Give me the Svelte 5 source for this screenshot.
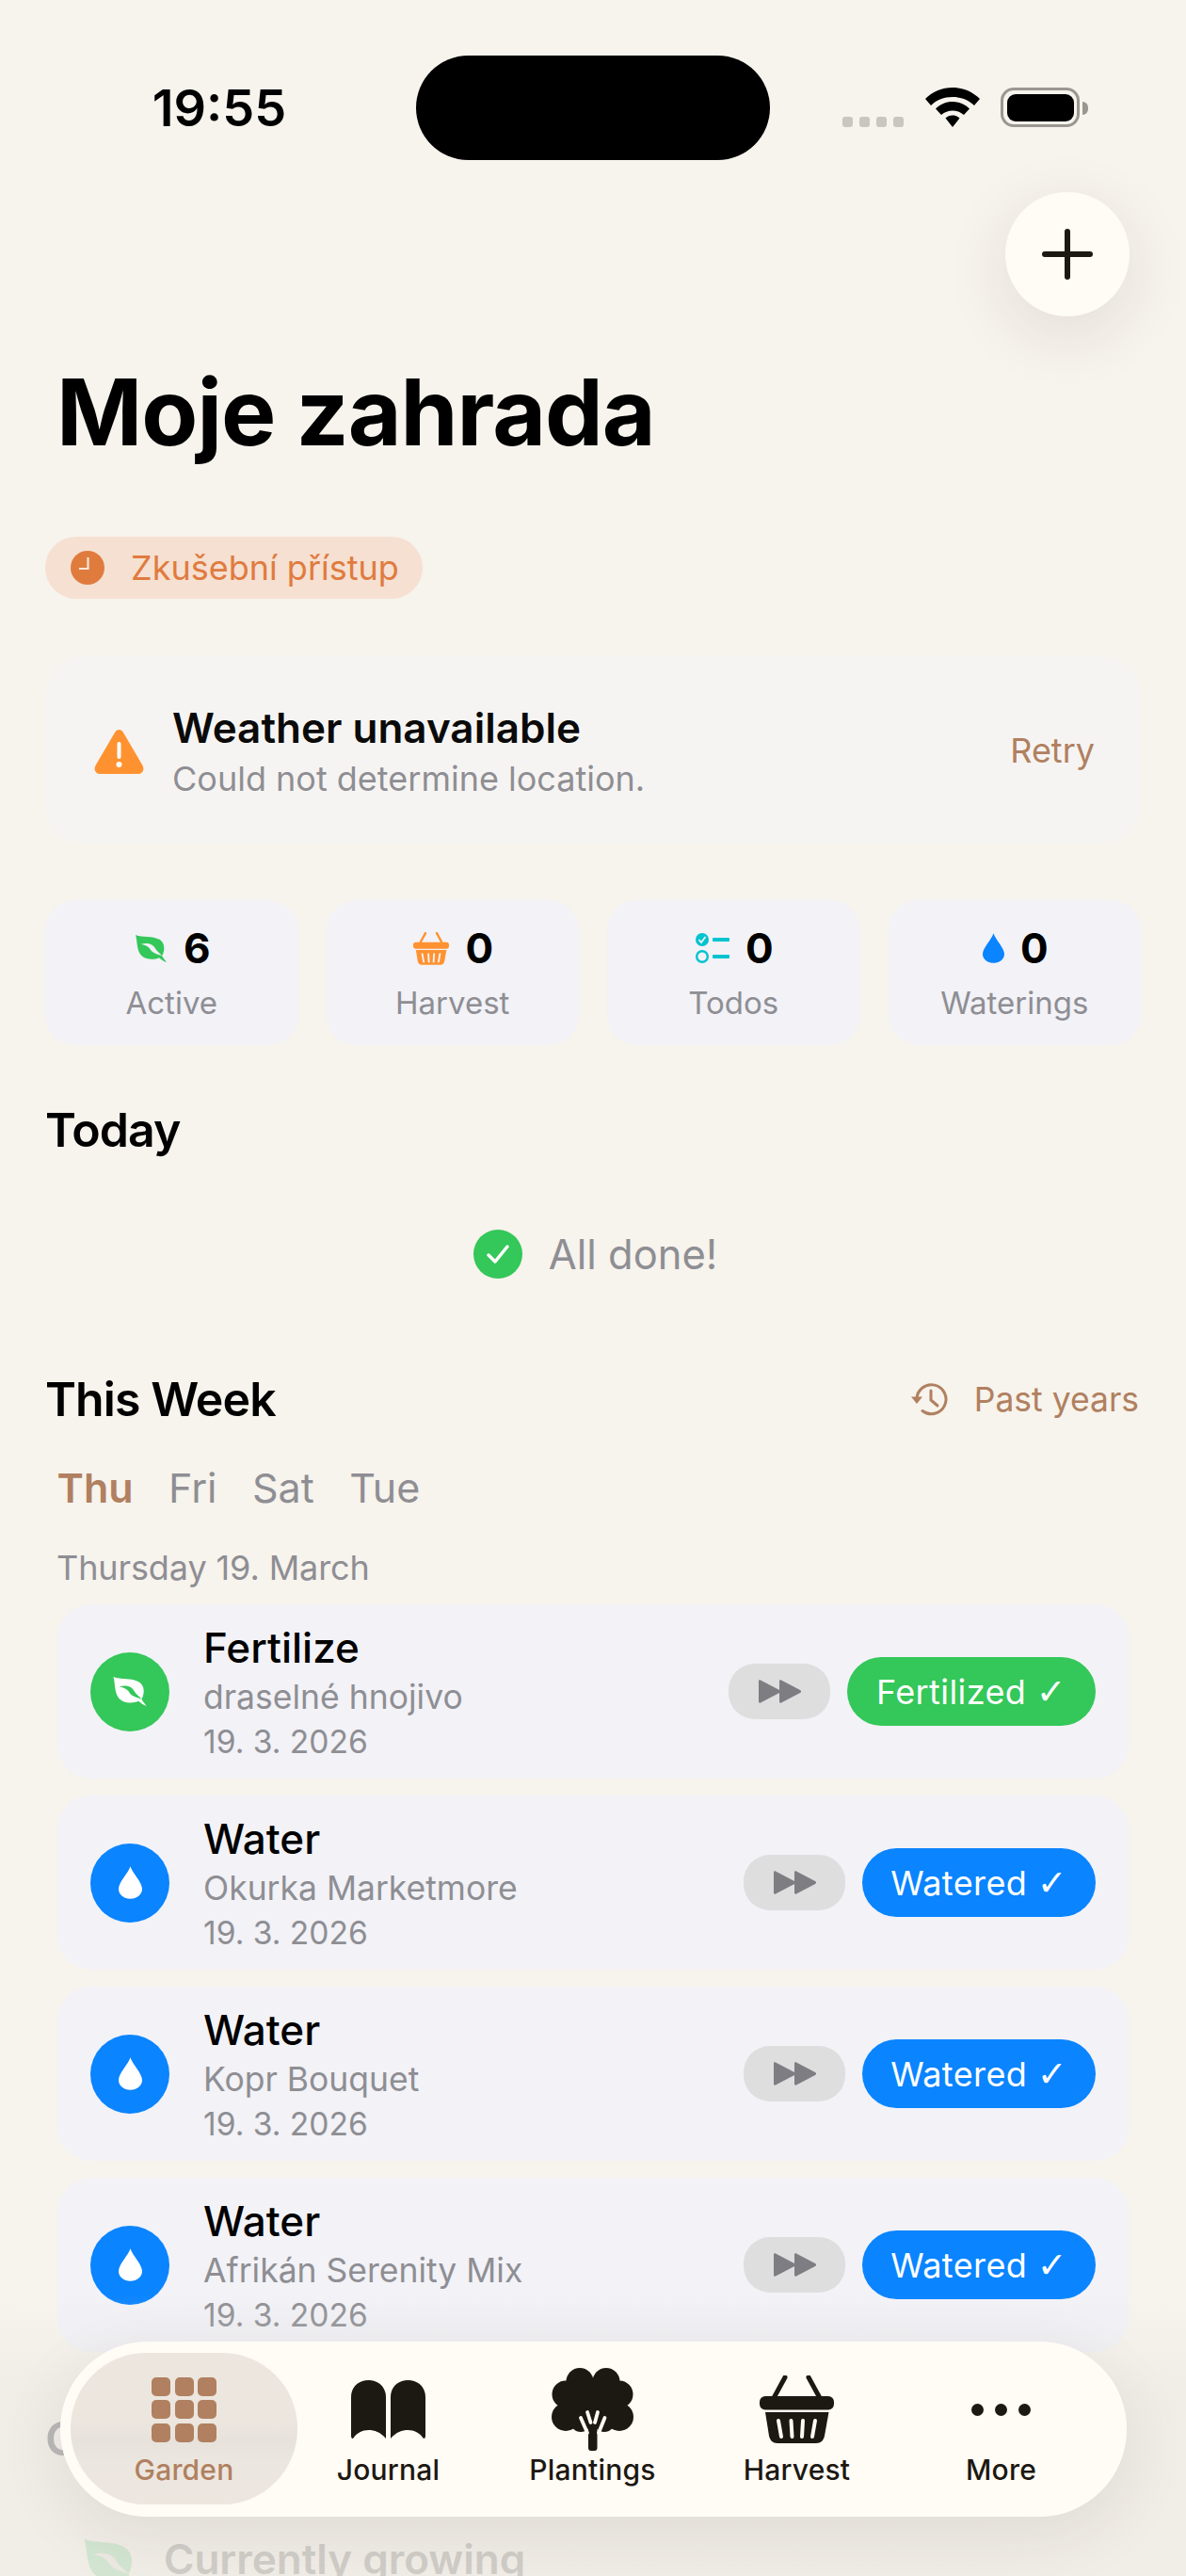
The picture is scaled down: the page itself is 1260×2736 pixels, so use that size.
<script>
  const stats = [
    { k: 'leaf', n: 6, l: 'Active' },
    { k: 'basket', n: 0, l: 'Harvest' },
    { k: 'todo', n: 0, l: 'Todos' },
    { k: 'drop', n: 0, l: 'Waterings' }
  ];
  const tasks = [
    { t: 'Fertilize', s: 'draselné hnojivo', a: 'Fertilized', g: true },
    { t: 'Water', s: 'Okurka Marketmore', a: 'Watered' },
    { t: 'Water', s: 'Kopr Bouquet', a: 'Watered' },
    { t: 'Water', s: 'Afrikán Serenity Mix', a: 'Watered' }
  ];
  const leafD = 'M1 0C8 3 20 1 27 5C34 9 33 18 30 23C31 25 33 27 35 30C32 29 29 27 27 25C20 28 10 27 6 21C2 15 3 7 1 0Z';
</script>

{#snippet leaf(cls, vein)}
  <svg class={cls} viewBox="0 0 36 30" aria-hidden="true">
    <path d={leafD} fill="currentColor" />
    <path d="M7 10C14 8 20 10 22 14C24 18 28 20 30 23C25 21 20 20 18 17C16 13 12 11 7 10Z" fill={vein} />
  </svg>
{/snippet}

{#snippet drop(cls)}
  <svg class={cls} viewBox="0 0 24 33" aria-hidden="true">
    <path d="M12 0C14 7 24 16 24 23C24 29 18.500 33 12 33C5.500 33 0 29 0 23C0 16 10 7 12 0Z" fill="currentColor" />
  </svg>
{/snippet}

{#snippet basket(cls, bg)}
  <svg class={cls} viewBox="0 0 79 72" aria-hidden="true">
    <path d="M27 2L15 24M52 2L64 24" stroke="currentColor" stroke-width="5" stroke-linecap="round" fill="none" />
    <rect x="0" y="22" width="79" height="14.500" rx="6" fill="currentColor" />
    <path d="M6 39H73.500L69 64C68 69 65 72 60 72H19C14 72 11 69 10 64Z" fill="currentColor" />
    <path d="M20 48L23 65M33.500 48L34.500 65M46 48L45 65M59 48L56 65" stroke={bg} stroke-width="4" stroke-linecap="round" fill="none" />
  </svg>
{/snippet}

{#snippet todo(cls)}
  <svg class={cls} viewBox="0 0 36 32" aria-hidden="true">
    <circle cx="7" cy="7" r="7" fill="currentColor" />
    <path d="M3.500 7L6 10L10.500 4" stroke="#f2f2f7" stroke-width="1.800" fill="none" />
    <circle cx="7" cy="25" r="5.800" fill="none" stroke="currentColor" stroke-width="2.400" />
    <rect x="18" y="5" width="18" height="4" rx="1" fill="currentColor" />
    <rect x="18" y="23" width="18" height="4" rx="1" fill="currentColor" />
  </svg>
{/snippet}

{#snippet skip()}
  <svg class="skip-ic" viewBox="0 0 46 25" aria-hidden="true">
    <path d="M1 1.500C1 .500 2 0 3 .500L23 11C24.500 12 24.500 13 23 14L3 24.500C2 25 1 24.500 1 23.500Z M23 1.500C23 .500 24 0 25 .500L45 11C46.500 12 46.500 13 45 14L25 24.500C24 25 23 24.500 23 23.500Z" fill="currentColor" />
  </svg>
{/snippet}

<div class="page">
  <header class="status">
    <div class="time-wrap"><span class="time">19:55</span></div>
    <div class="island"></div>
    <div class="sys">
      <div class="dots"><i></i><i></i><i></i><i></i></div>
      <svg class="wifi" viewBox="0 0 58 42" aria-hidden="true">
        <path d="M29 0C40 0 50 4 58 12L52 19C46 13 38 10 29 10C20 10 12 13 6 19L0 12C8 4 18 0 29 0Z" fill="#000" />
        <path d="M29 15C36 15 42 17.500 47 22.500L41 29C37.500 26 33.500 24.500 29 24.500C24.500 24.500 20.500 26 17 29L11 22.500C16 17.500 22 15 29 15Z" fill="#000" />
        <path d="M29 29.500C32 29.500 34.500 30.500 36.500 32.500L29 42L21.500 32.500C23.500 30.500 26 29.500 29 29.500Z" fill="#000" />
      </svg>
      <div class="battery"><span class="cell"></span></div>
      <span class="cap"></span>
    </div>
  </header>

  <button class="fab" aria-label="Add">
    <svg viewBox="0 0 54 54" aria-hidden="true"><path d="M27 3V51M3 27H51" stroke="#1c1812" stroke-width="6" stroke-linecap="round" /></svg>
  </button>

  <h1>Moje zahrada</h1>

  <div class="badge">
    <svg viewBox="0 0 36 36" aria-hidden="true">
      <circle cx="18" cy="18" r="18" fill="#e07b3e" />
      <path d="M18.500 7V19H9" stroke="#f7e4d7" stroke-width="2.200" fill="none" />
    </svg>
    <span>Zkušební přístup</span>
  </div>

  <section class="weather">
    <svg class="warn" viewBox="0 0 53 47" aria-hidden="true">
      <path d="M22 3C24 -1 29 -1 31 3L51.500 38C54 43 51 47 46 47H7C2 47 -1 43 1.500 38Z" fill="#ff9230" />
      <rect x="24.500" y="13" width="4" height="18" rx="2" fill="#fff" />
      <circle cx="26.500" cy="37" r="3" fill="#fff" />
    </svg>
    <div class="w-text">
      <div class="w-title">Weather unavailable</div>
      <div class="w-sub">Could not determine location.</div>
    </div>
    <span class="retry">Retry</span>
  </section>

  <section class="stats">
    {#each stats as s}
      <div class="stat">
        <div class="stat-top">
          {#if s.k === 'leaf'}
            {@render leaf('st-leaf', '#f2f2f7')}
          {:else if s.k === 'basket'}
            {@render basket('st-basket', '#f2f2f7')}
          {:else if s.k === 'todo'}
            {@render todo('st-todo')}
          {:else}
            {@render drop('st-drop')}
          {/if}
          <b>{s.n}</b>
        </div>
        <div class="stat-l">{s.l}</div>
      </div>
    {/each}
  </section>

  <h2 class="today">Today</h2>
  <div class="done">
    <svg viewBox="0 0 52 52" aria-hidden="true">
      <circle cx="26" cy="26" r="26" fill="#34c759" />
      <path d="M16 27L23 34L36 18" stroke="#fff" stroke-width="3.500" fill="none" stroke-linecap="round" stroke-linejoin="round" />
    </svg>
    <span>All done!</span>
  </div>

  <div class="week-head">
    <h2>This Week</h2>
    <div class="past">
      <svg viewBox="0 0 40 36" aria-hidden="true">
        <path d="M6 18A15.500 15.500 0 1 1 12 30.500" fill="none" stroke="currentColor" stroke-width="3" stroke-linecap="round" />
        <path d="M0 15.500H12L6 23Z" fill="currentColor" />
        <path d="M21 9V19L28 25" fill="none" stroke="currentColor" stroke-width="3" stroke-linecap="round" stroke-linejoin="round" />
      </svg>
      <span>Past years</span>
    </div>
  </div>

  <nav class="days">
    <span class="on">Thu</span><span>Fri</span><span>Sat</span><span>Tue</span>
  </nav>

  <div class="date-h">Thursday 19. March</div>

  <div class="tasks">
    {#each tasks as t}
      <article class="task">
        <div class="t-ic" class:green={t.g}>
          {#if t.g}
            {@render leaf('t-leaf', '#34c759')}
          {:else}
            {@render drop('t-drop')}
          {/if}
        </div>
        <div class="t-text">
          <div class="t-title">{t.t}</div>
          <div class="t-sub">{t.s}</div>
          <div class="t-date">19. 3. 2026</div>
        </div>
        <button class="skip" aria-label="Skip">{@render skip()}</button>
        <button class="act" class:green={t.g}>{t.a} <span class="chk">✓</span></button>
      </article>
    {/each}
  </div>

  <h2 class="hidden-h">Crops overview</h2>
  <div class="growing">
    {@render leaf('g-leaf', '#ece8e2')}
    <span>Currently growing</span>
  </div>

  <div class="fog"></div>

  <nav class="tabbar">
    <div class="tab active">
      <div class="tab-ic">
        <div class="grid9">
          {#each Array(9) as _}<i></i>{/each}
        </div>
      </div>
      <span>Garden</span>
    </div>
    <div class="tab">
      <div class="tab-ic">
        <svg class="book" viewBox="0 0 79 62" aria-hidden="true">
          <path d="M0 59V18C0 7 8 0 18.500 0C29 0 37 7 37 18V62C31 55 25 53 18.500 53C12 53 6 56 2.500 61.500C1.500 62.500 0 62 0 59Z" fill="#1c1812" />
          <path d="M79 59V18C79 7 71 0 60.500 0C50 0 42 7 42 18V62C48 55 54 53 60.500 53C67 53 73 56 76.500 61.500C77.500 62.500 79 62 79 59Z" fill="#1c1812" />
        </svg>
      </div>
      <span>Journal</span>
    </div>
    <div class="tab">
      <div class="tab-ic">
        <svg class="tree" viewBox="0 0 87 88" aria-hidden="true">
          <g fill="#1c1812">
            <circle cx="30" cy="14.500" r="14.500" /><circle cx="58" cy="14.500" r="14.500" />
            <circle cx="15" cy="28" r="14.500" /><circle cx="72" cy="28" r="14.500" />
            <circle cx="15" cy="52" r="15" /><circle cx="72" cy="52" r="15" />
            <rect x="15" y="14" width="57" height="40" />
            <circle cx="31" cy="57" r="11" /><circle cx="56" cy="57" r="11" />
            <rect x="39" y="50" width="9.500" height="38" rx="3" />
          </g>
          <path d="M31 53L38 69M56.500 53L50 69M38 47L41.500 58M49 47L46 58" stroke="#fffbf5" stroke-width="3.800" stroke-linecap="round" fill="none" />
        </svg>
      </div>
      <span>Plantings</span>
    </div>
    <div class="tab">
      <div class="tab-ic">{@render basket('tab-basket', '#fffbf5')}</div>
      <span>Harvest</span>
    </div>
    <div class="tab">
      <div class="tab-ic"><div class="more"><i></i><i></i><i></i></div></div>
      <span>More</span>
    </div>
  </nav>
</div>

<style>
  :global(body) { margin: 0; background: #f7f3ed; }
  .page {
    position: relative;
    width: 1260px;
    height: 2736px;
    overflow: hidden;
    background: #f7f3ed;
    font-family: Inter, "Liberation Sans", sans-serif;
    color: #000;
  }
  h1, h2 { margin: 0; font-weight: 600; }
  button { border: 0; font-family: inherit; padding: 0; }

  .status { display: flex; height: 170px; }
  .time-wrap { width: 442px; display: flex; justify-content: center; padding: 89px 0 0 24px; box-sizing: border-box; }
  .time { font-size: 54px; line-height: 52px; font-weight: 600; }
  .island { width: 376px; height: 111px; margin-top: 59px; border-radius: 56px; background: #000; }
  .sys { display: flex; align-items: flex-end; height: 42px; margin-top: 93px; padding-left: 77px; }
  .dots { display: flex; gap: 7px; }
  .dots i { width: 11px; height: 11px; border-radius: 3px; background: #c8c6c1; }
  .wifi { width: 58px; height: 42px; margin-left: 23px; }
  .battery { width: 84px; height: 42px; box-sizing: border-box; margin-left: 22px; border: 3.500px solid #9a9690; border-radius: 14px; padding: 3.500px; }
  .cell { display: block; height: 100%; background: #000; border-radius: 9px; }
  .cap { width: 6px; height: 14px; margin: 0 0 13px 3px; background: #9a9690; border-radius: 0 7px 7px 0; }

  .fab {
    position: absolute; left: 1068px; top: 204px; width: 132px; height: 132px;
    border-radius: 50%; background: #fffbf5;
    box-shadow: 0 18px 70px rgba(60, 45, 30, .11);
    display: flex; align-items: center; justify-content: center;
  }
  .fab svg { width: 54px; height: 54px; }

  h1 { margin: 210px 0 0 60px; font-size: 98px; line-height: 116px; font-weight: 700; letter-spacing: -1px; }

  .badge {
    display: inline-flex; align-items: center; gap: 28px; box-sizing: border-box;
    height: 66px; margin: 74px 0 0 48px; padding: 0 25px 0 27px; border-radius: 33px;
    background: #f5e0d2; color: #e07b3e; font-size: 36px; vertical-align: top;
  }
  .badge svg { width: 36px; height: 36px; }

  .weather {
    display: flex; align-items: center; box-sizing: border-box;
    width: 1164px; height: 199px; margin: 61px 0 0 48px; padding: 0 49px 0 52px;
    border-radius: 40px; background: #f6f4f2;
  }
  .warn { width: 53px; height: 47px; margin-top: 4px; }
  .w-text { flex: 1; margin-left: 30px; padding-top: 3px; }
  .w-title { font-size: 44px; line-height: 50px; font-weight: 600; color: #0a0a0a; }
  .w-sub { font-size: 36px; line-height: 44px; margin-top: 7px; color: #8e8e93; }
  .retry { font-size: 36px; color: #b08060; }

  .stats { display: grid; grid-template-columns: repeat(4, 1fr); gap: 30px; width: 1164px; margin: 60px 0 0 48px; }
  .stat { height: 154px; border-radius: 32px; background: #f2f2f7; display: flex; flex-direction: column; align-items: center; padding-top: 29px; box-sizing: border-box; }
  .stat-top { display: flex; align-items: center; gap: 17px; height: 44px; padding-left: 2px; }
  .stat-top b { font-size: 44px; line-height: 44px; font-weight: 700; }
  .stat-l { font-size: 33px; line-height: 44px; margin-top: 14px; color: #8e8e93; }
  .st-leaf { width: 35px; height: 29px; color: #34c759; }
  .st-basket { width: 38px; height: 35px; color: #ff9230; }
  .st-todo { width: 36px; height: 32px; color: #00c3d0; }
  .st-drop { width: 23px; height: 32px; color: #0a84ff; }

  h2 { font-size: 50px; line-height: 60px; letter-spacing: -.9px; }
  .today { margin: 60px 0 0 48px; }
  .done { display: flex; justify-content: center; align-items: center; gap: 28px; height: 64px; margin-top: 70px; padding-left: 5px; color: #8e8e93; font-size: 43.500px; }
  .done svg { width: 52px; height: 52px; }

  .week-head { display: flex; justify-content: space-between; align-items: center; margin: 92px 50px 0 48px; height: 60px; }
  .past { display: flex; align-items: center; gap: 27px; font-size: 35.500px; color: #b08060; }
  .past svg { width: 40px; height: 36px; }

  .days { display: flex; gap: 37.500px; margin: 36px 0 0 60.500px; font-size: 43px; line-height: 56px; color: #8e8e93; }
  .on { color: #b08060; font-weight: 600; }

  .date-h { margin: 35px 0 0 60px; font-size: 36px; letter-spacing: -.1px; line-height: 44px; color: #8e8e93; }

  .tasks { display: flex; flex-direction: column; gap: 18px; margin: 17px 61px 0; }
  .task { display: flex; align-items: center; box-sizing: border-box; height: 185px; padding: 0 35px; border-radius: 36px; background: #f2f2f7; }
  .t-ic { width: 84px; height: 84px; border-radius: 50%; background: #0a84ff; display: flex; align-items: center; justify-content: center; color: #fff; flex: none; }
  .t-ic.green { background: #34c759; }
  .t-leaf { width: 38px; height: 31px; }
  .t-drop { width: 25px; height: 35px; }
  .t-text { flex: 1; margin-left: 36px; padding-top: 5px; }
  .t-title { font-size: 44px; line-height: 50px; font-weight: 500; }
  .t-sub { font-size: 35.500px; line-height: 46px; margin-top: 5px; color: #8e8e93; }
  .t-date { font-size: 33.600px; line-height: 46px; margin-top: 1px; color: #8e8e93; }
  .skip { width: 108px; height: 59px; border-radius: 28px; background: #dededf; color: #7d7d82; display: flex; align-items: center; justify-content: center; flex: none; }
  .skip-ic { width: 46px; height: 25px; }
  .act { height: 73px; margin-left: 18px; padding: 0 30px; border-radius: 37px; background: #0a84ff; color: #fff; font-size: 36px; letter-spacing: .4px; flex: none; }
  .act.green { background: #34c759; padding: 0 31px; }
  .chk { font-family: "DejaVu Sans", sans-serif; font-size: 38px; }

  .hidden-h { margin: 62px 0 0 48px; color: #8e8e93; }
  .growing { display: flex; align-items: flex-start; gap: 28px; margin: 70px 0 0 88px; font-size: 44px; line-height: 56px; font-weight: 600; color: #b0aeaa; }
  .g-leaf { width: 58px; height: 50px; color: #b5e3bf; margin-top: 6px; }

  .fog {
    position: absolute; left: 0; right: 0; bottom: 0; height: 300px;
    background: linear-gradient(to bottom, rgba(236, 232, 226, 0), rgba(232, 229, 224, .45) 35%, rgba(236, 232, 226, .55));
    pointer-events: none;
  }

  .tabbar {
    position: absolute; left: 64px; top: 2487px; width: 1133px; height: 186px;
    display: flex; box-sizing: border-box; padding: 12px 2px 13px 11px;
    border-radius: 93px; background: #fffbf5;
    box-shadow: 0 20px 70px rgba(60, 45, 30, .09), inset 0 0 0 1px rgba(255, 255, 255, .5);
  }
  .tab { width: 217px; display: flex; flex-direction: column; align-items: center; color: #1c1812; font-size: 30px; font-weight: 500; letter-spacing: .2px; flex: none; box-sizing: border-box; padding-top: 16px; }
  .tab span { line-height: 40px; }
  .tab:first-child { width: 241px; margin-right: -12px; }
  .tab.active { border-radius: 80px; color: #b08060; background: linear-gradient(to bottom, #ece6df 0 45%, #e7e2db 58%, #ebe6df 72%, #ece6df); }
  .tab-ic { height: 88px; display: flex; align-items: center; justify-content: center; }
  .grid9 { display: grid; grid-template-columns: repeat(3, 20px); grid-auto-rows: 20px; gap: 4.500px; }
  .grid9 i { background: #b08060; border-radius: 5px; }
  .book { width: 79px; height: 62px; }
  .tree { width: 87px; height: 88px; }
  .tab-basket { width: 79px; height: 72px; color: #1c1812; }
  .more { display: flex; gap: 12px; }
  .more i { width: 13px; height: 13px; border-radius: 50%; background: #1c1812; }
</style>
